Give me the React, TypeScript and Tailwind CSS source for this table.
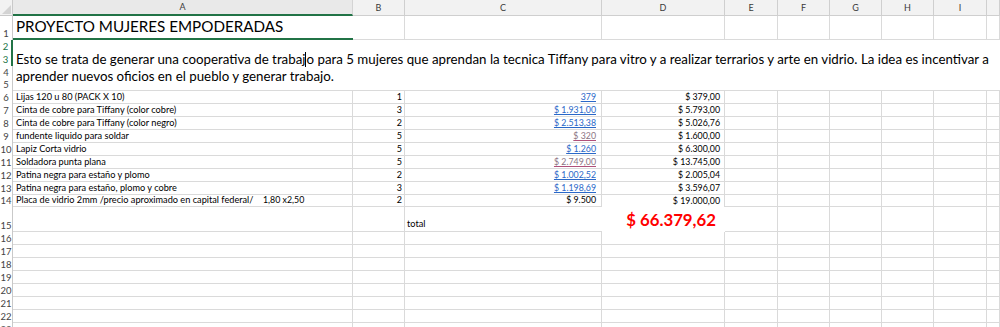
import type { ReactNode } from 'react'

const FONT = { fontFamily: 'Lato, "Open Sans", sans-serif' }

const COLS = ['A', 'B', 'C', 'D', 'E', 'F', 'G', 'H', 'I', '']
const WIDTHS = [
  'w-[340px]',
  'w-[52px]',
  'w-[197px]',
  'w-[123px]',
  'w-[53px]',
  'w-[52px]',
  'w-[52px]',
  'w-[52px]',
  'w-[53px]',
  'w-[13px]',
]

type Link = 'link' | 'visited' | 'plain'

const ITEMS: { name: ReactNode; qty: number; price: string; kind: Link; total: string }[] = [
  { name: 'Lijas 120 u 80 (PACK X 10)', qty: 1, price: '379', kind: 'link', total: '$ 379,00' },
  { name: 'Cinta de cobre para Tiffany (color cobre)', qty: 3, price: '$ 1.931,00', kind: 'link', total: '$ 5.793,00' },
  { name: 'Cinta de cobre para Tiffany (color negro)', qty: 2, price: '$ 2.513,38', kind: 'link', total: '$ 5.026,76' },
  { name: 'fundente liquido para soldar', qty: 5, price: '$ 320', kind: 'visited', total: '$ 1.600,00' },
  { name: 'Lapiz Corta vidrio', qty: 5, price: '$ 1.260', kind: 'link', total: '$ 6.300,00' },
  { name: 'Soldadora punta plana', qty: 5, price: '$ 2.749,00', kind: 'visited', total: '$ 13.745,00' },
  { name: 'Patina negra para estaño y plomo', qty: 2, price: '$ 1.002,52', kind: 'link', total: '$ 2.005,04' },
  { name: 'Patina negra para estaño, plomo y cobre', qty: 3, price: '$ 1.198,69', kind: 'link', total: '$ 3.596,07' },
  {
    name: (
      <>
        <span className="inline-block w-[247px]">Placa de vidrio 2mm /precio aproximado en capital federal/</span>
        <span className="text-[8.8px]">1,80 x2,50</span>
      </>
    ),
    qty: 2,
    price: '$ 9.500',
    kind: 'plain',
    total: '$ 19.000,00',
  },
]

function RowNum({ n, green }: { n: number | string; green?: boolean }) {
  return (
    <div
      className={`flex h-full w-[13px] shrink-0 items-end justify-center pb-[1px] text-[9.5px] leading-[11px] ${
        green ? 'border-r-2 border-[#217346] text-[#217346]' : 'border-r border-[#c9c9c9] text-[#444]'
      }`}
    >
      {n}
    </div>
  )
}

function Cell({ i, className = '', children }: { i: number; className?: string; children?: ReactNode }) {
  return (
    <div className={`h-full shrink-0 border-[#dadada] ${WIDTHS[i]} ${className}`}>{children}</div>
  )
}

function EmptyCells({ from }: { from: number }) {
  return (
    <>
      {WIDTHS.slice(from).map((_, k) => (
        <Cell key={k} i={from + k} className="border-r border-b" />
      ))}
    </>
  )
}

function Price({ kind, children }: { kind: Link; children: ReactNode }) {
  if (kind === 'plain') return <span>{children}</span>
  return (
    <span
      className={`underline underline-offset-[1px] ${
        kind === 'link' ? 'text-[#2a68c8] decoration-[#2a68c8]' : 'text-[#8c7583] decoration-[#b0507a]'
      }`}
    >
      {children}
    </span>
  )
}

export default function App() {
  return (
    <div className="h-[327px] w-[1000px] overflow-hidden bg-white text-black" style={FONT}>
      {/* column headers */}
      <div className="flex h-[16px] bg-[#f2f2f2]">
        <div className="relative h-full w-[13px] shrink-0 border-r border-b border-[#c9c9c9]">
          <svg className="absolute right-[1px] bottom-[1px]" width="9" height="9" viewBox="0 0 9 9">
            <polygon points="9,0 9,9 0,9" fill="#d3d3d3" />
          </svg>
        </div>
        {COLS.map((c, i) => (
          <div
            key={i}
            className={`flex h-full shrink-0 items-center justify-center border-r text-[9px] text-[#3a3a3a] ${WIDTHS[i]} ${
              i === 0 ? 'border-b-2 border-r-[#d4d4d4] border-b-[#217346] bg-[#e9e9e9]' : 'border-b border-[#cfcfcf]'
            }`}
          >
            {c}
          </div>
        ))}
      </div>

      {/* row 1 */}
      <div className="flex h-[24px]">
        <RowNum n={1} />
        <Cell i={0} className="flex items-end border-b-2 border-b-[#217346] pb-[2px] pl-[3px]">
          <span className="text-[15.2px] leading-[20px]">PROYECTO MUJERES EMPODERADAS</span>
        </Cell>
        <EmptyCells from={1} />
      </div>

      {/* rows 2-5, merged description */}
      <div className="flex h-[51px]">
        <div className="flex h-full w-[13px] shrink-0 flex-col">
          <div className="h-[13px]"><RowNum n={2} green /></div>
          <div className="h-[13px]"><RowNum n={3} green /></div>
          <div className="h-[13px]"><RowNum n={4} /></div>
          <div className="h-[12px]"><RowNum n={5} /></div>
        </div>
        <div className="flex h-full flex-1 items-end border-b border-[#dadada] pb-[5px] pl-[3px]">
          <p className="whitespace-nowrap text-[13.3px] leading-[17px]">
            Esto se trata de generar una cooperativa de trabaj
            <span className="relative inline-block h-[15px] w-0 border-l border-black align-[-3px]" />
            o para 5 mujeres que aprendan la tecnica Tiffany para vitro y a realizar terrarios y arte en vidrio. La
            idea es incentivar a
            <br />
            aprender nuevos oficios en el pueblo y generar trabajo.
          </p>
        </div>
      </div>

      {/* rows 6-14 */}
      {ITEMS.map((it, r) => {
        const last = r === ITEMS.length - 1
        return (
          <div key={r} className={`flex leading-[11px] ${last ? 'h-[12px]' : 'h-[13px]'}`}>
            <RowNum n={r + 6} />
            <Cell i={0} className="flex items-end border-r border-b pb-[1px] pl-[3px] text-[9.2px] whitespace-nowrap">
              {it.name}
            </Cell>
            <Cell i={1} className="flex items-end justify-end border-r border-b pb-[1px] pr-[2px] text-[9px]">
              {it.qty}
            </Cell>
            <Cell i={2} className="flex items-end justify-end border-r border-b pb-[1px] pr-[5px] text-[8.8px]">
              <Price kind={it.kind}>{it.price}</Price>
            </Cell>
            <Cell
              i={3}
              className={`flex items-end justify-end border-r pb-[1px] pr-[4px] text-[8.8px] ${last ? '' : 'border-b'}`}
            >
              {it.total}
            </Cell>
            <EmptyCells from={4} />
          </div>
        )
      })}

      {/* row 15 total */}
      <div className="flex h-[25px] leading-[11px]">
        <RowNum n={15} />
        <Cell i={0} className="border-r border-b" />
        <Cell i={1} className="border-r border-b" />
        <Cell i={2} className="flex items-end border-b pb-[2px] pl-[2px] text-[9.2px]">
          total
        </Cell>
        <Cell i={3} className="flex items-center justify-end pr-[9px] pt-[1px]">
          <span className="text-[16.8px] font-bold leading-[20px] text-[#ff0000]">$ 66.379,62</span>
        </Cell>
        <EmptyCells from={4} />
      </div>

      {/* rows 16-23 */}
      {[16, 17, 18, 19, 20, 21, 22, 23].map((n) => (
        <div key={n} className="flex h-[13px]">
          <RowNum n={n} />
          <EmptyCells from={0} />
        </div>
      ))}
    </div>
  )
}
